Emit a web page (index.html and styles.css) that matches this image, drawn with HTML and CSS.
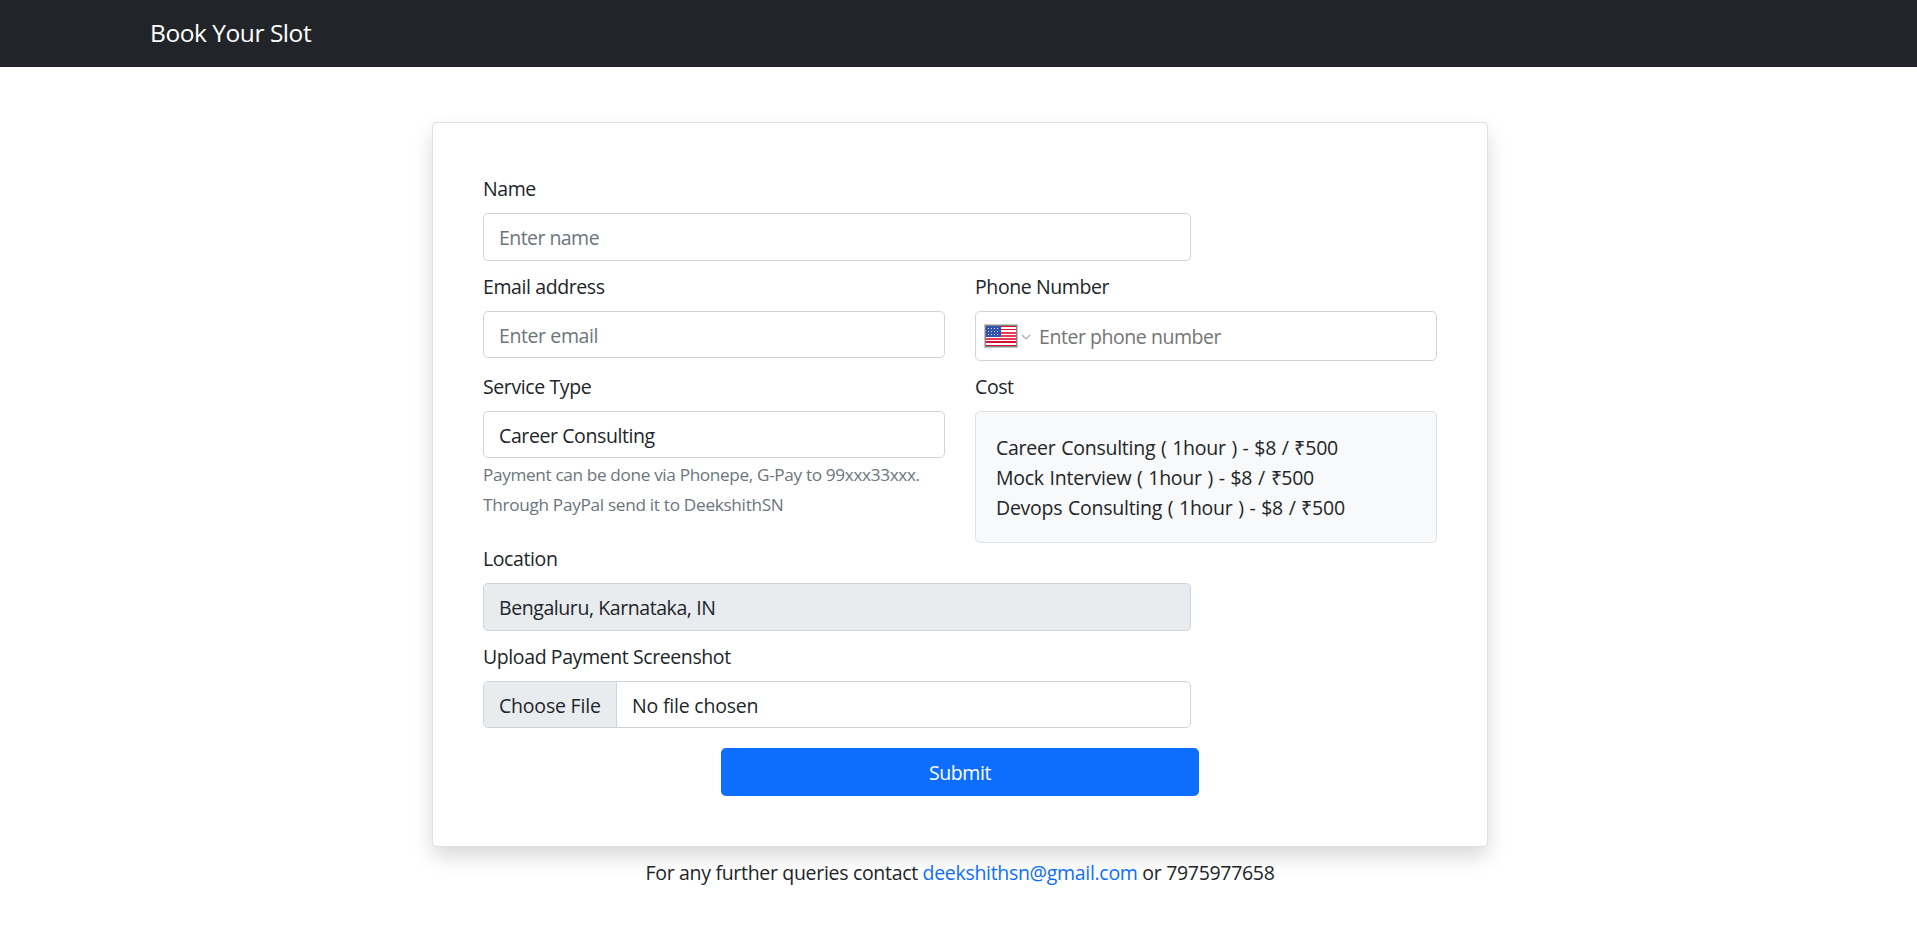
FILE: index.html
```html
<!DOCTYPE html>
<html lang="en">
<head>
<meta charset="utf-8">
<title>Book Your Slot</title>
<link rel="stylesheet" href="styles.css">
</head>
<body>
<nav class="navbar"><a class="brand">Book Your Slot</a></nav>
<main class="page">
  <form class="card">
    <div class="field wide name">
      <label class="label"><span>Name</span></label>
      <input class="control tall name-input" type="text" placeholder="Enter name">
    </div>
    <div class="row contact-row">
      <div class="field">
        <label class="label"><span>Email address</span></label>
        <input class="control" type="email" placeholder="Enter email">
      </div>
      <div class="field">
        <label class="label"><span>Phone Number</span></label>
        <div class="phone">
          <svg class="flag" width="34" height="24" viewBox="0 0 34 24">
            <rect width="34" height="24" fill="#c4c4c4"/>
            <rect x="1" y="1" width="32" height="22" fill="#858585"/>
            <rect x="2" y="2" width="30" height="20" fill="#fff"/>
            <path fill="#d80f30" d="M2 2h30v1H2zM2 5h30v1H2zM2 17h30v2H2zM2 21h30v1H2z"/>
            <path fill="#e73b56" d="M2 8h30v2H2zM2 11h30v2H2zM2 14h30v2H2z"/>
            <rect x="2" y="2" width="15" height="11" fill="#3154b3"/>
            <path stroke="#d5def5" stroke-width="1" stroke-dasharray="1 2" d="M4 4.500h12M4 7.500h12M4 10.500h12"/>
          </svg>
          <svg class="chevron" width="10" height="7" viewBox="0 0 10 7"><path d="M1 1l4 4 4-4" fill="none" stroke="#aaa" stroke-width="1.200"/></svg>
          <input class="phone-input" type="tel" placeholder="Enter phone number">
        </div>
      </div>
    </div>
    <div class="row service-row">
      <div class="field">
        <label class="label"><span>Service Type</span></label>
        <div class="control"><span>Career Consulting</span></div>
        <p class="hint"><span class="pay">Payment can be done via Phonepe, G-Pay to 99xxx33xxx.</span><br><span class="through">Through PayPal send it to DeekshithSN</span></p>
      </div>
      <div class="field">
        <label class="label"><span>Cost</span></label>
        <div class="costs">
          <div>Career Consulting ( 1hour ) - $8 / ₹500</div>
          <div>Mock Interview ( 1hour ) - $8 / ₹500</div>
          <div>Devops Consulting ( 1hour ) - $8 / ₹500</div>
        </div>
      </div>
    </div>
    <div class="field wide location">
      <label class="label"><span>Location</span></label>
      <input class="control tall disabled" type="text" value="Bengaluru, Karnataka, IN" readonly>
    </div>
    <div class="field wide upload">
      <label class="label"><span>Upload Payment Screenshot</span></label>
      <div class="control file"><span class="choose">Choose File</span><span class="chosen">No file chosen</span></div>
    </div>
    <button class="submit" type="button">Submit</button>
  </form>
  <p class="queries">For any further queries contact <a>deekshithsn@gmail.com</a> or 7975977658</p>
</main>
</body>
</html>
```
FILE: styles.css
```css
* { box-sizing: border-box; }
body {
  margin: 0;
  background: #fff;
  color: #212529;
  font: 19.5px/30px "Open Sans", sans-serif;
  letter-spacing: -.4px;
}
input, button { font: inherit; color: inherit; letter-spacing: inherit; }
p { margin: 0; }
.navbar {
  height: 67px;
  padding: 14px 150px;
  background: #212529;
}
.brand { display: block; font-size: 24.5px; line-height: 38px; letter-spacing: -.45px; color: #fff; }
.page { display: flex; flex-direction: column; align-items: center; padding-top: 55px; padding-left: 3px; }
.card {
  width: 1056px;
  height: 725px;
  padding: 50px;
  border: 1px solid rgba(0, 0, 0, .125);
  border-radius: 5px;
  background: #fff;
  box-shadow: 0 10px 20px rgba(0, 0, 0, .15);
}
.row { display: grid; grid-template-columns: 462px 462px; column-gap: 30px; }
.wide { width: 708px; }
.label { display: block; height: 40px; line-height: 32px; }
.control {
  display: block;
  width: 100%;
  height: 47px;
  padding: 9px 15px 7px;
  border: 1px solid #ced4da;
  border-radius: 5px;
  background: #fff;
  line-height: 30px;
  outline: 0;
}
.tall { height: 48px; padding-bottom: 9px; }
input::placeholder { color: #6c757d; opacity: 1; }
.name { margin-bottom: 10px; }
.name-input { letter-spacing: -.55px; }
.contact-row { margin-bottom: 10px; }
.phone {
  display: flex;
  align-items: center;
  height: 50px;
  padding-left: 8px;
  border: 1px solid #ced4da;
  border-radius: 5px;
}
.flag { margin-right: 3px; }
.chevron { margin: 2px 8px 0 0; }
.phone-input { flex: 1; min-width: 0; height: 32px; padding: 0; border: 0; outline: 0; letter-spacing: -.45px; }
.phone-input::placeholder { color: #757575; }
.hint { padding-top: 2px; font-size: 17.2px; letter-spacing: -.35px; color: #6c757d; }
.through { letter-spacing: -.3px; }
.costs {
  height: 132px;
  padding: 21px 20px 0;
  border: 1px solid #dfe2e5;
  border-radius: 5px;
  background: #f8f9fa;
  letter-spacing: -.25px;
  word-spacing: .9px;
}
.disabled { background: #e9ecef; letter-spacing: -.42px; }
.location { margin-top: -1px; margin-bottom: 10px; padding-top: 1px; }
.file { display: flex; padding: 0; overflow: hidden; letter-spacing: -.2px; }
.choose { width: 133px; padding: 9px 0 7px 15px; border-right: 1px solid #ced4da; background: #e9ecef; }
.chosen { padding: 9px 15px 7px; }
.submit {
  display: block;
  width: 478px;
  height: 48px;
  margin: 20px auto 0;
  padding: 2px 0 0;
  border: 0;
  border-radius: 5px;
  background: #0d6efd;
  color: #fff;
}
.queries { margin-top: 11px; letter-spacing: -.31px; }
.queries a { color: #0d6efd; }
```
